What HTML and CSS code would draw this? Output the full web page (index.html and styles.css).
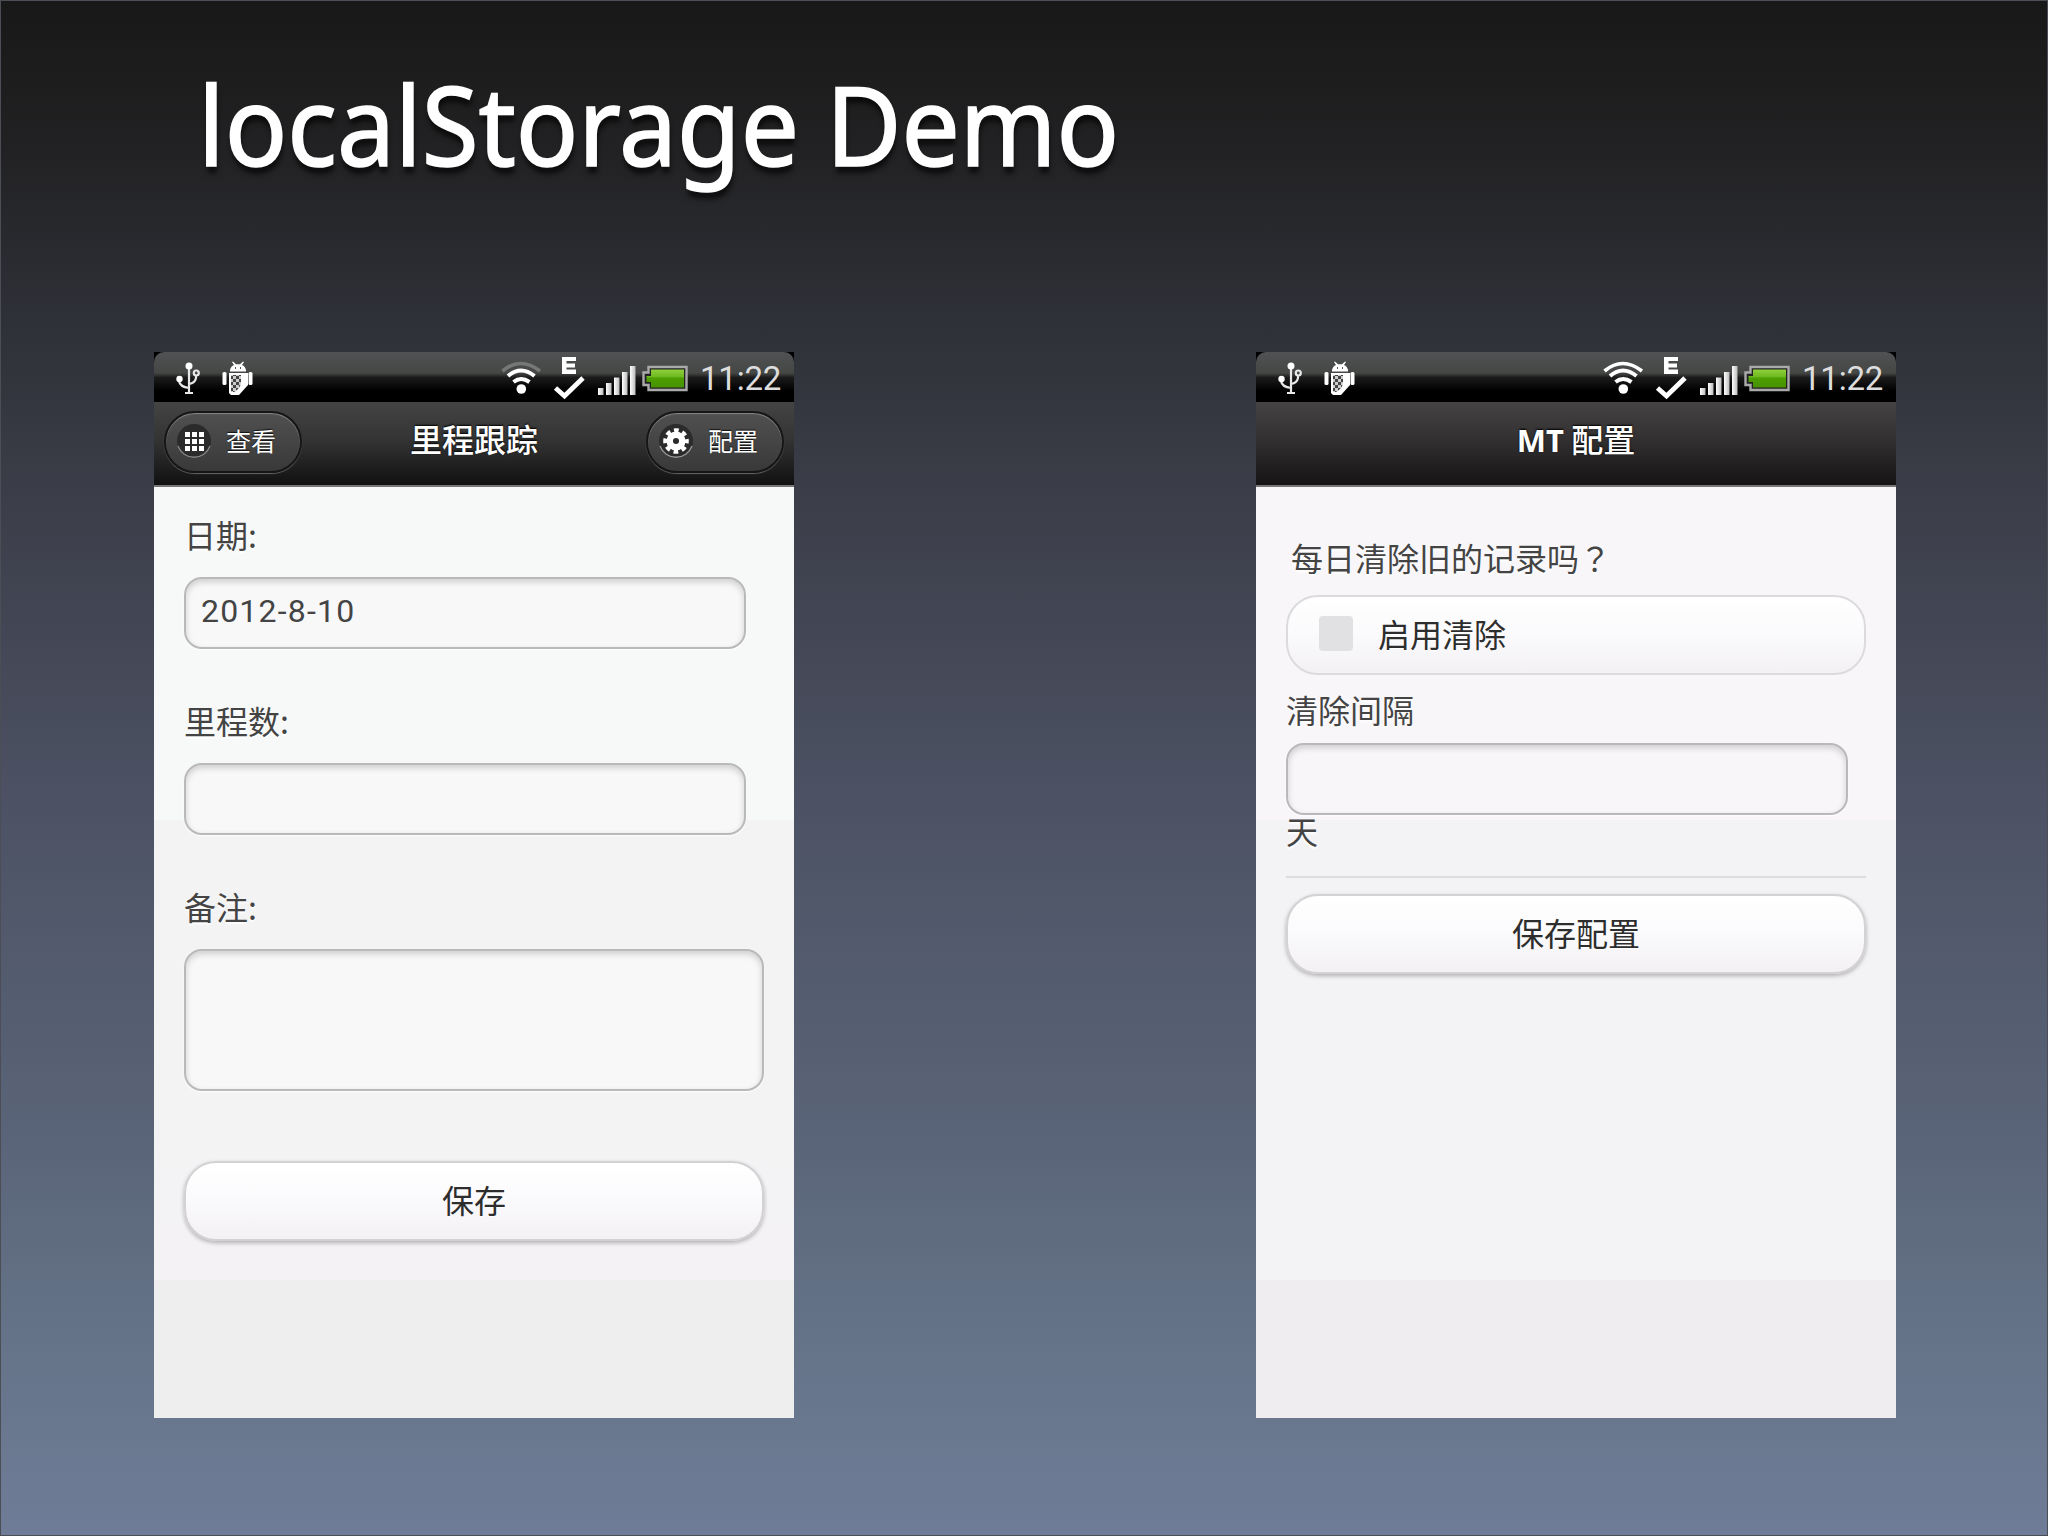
FILE: index.html
```html
<!DOCTYPE html>
<html lang="zh-CN">
<head>
<meta charset="utf-8">
<title>localStorage Demo</title>
<link rel="stylesheet" href="styles.css">
</head>
<body>
<svg class="defs" width="0" height="0" aria-hidden="true">
  <defs>
    <linearGradient id="bar" x1="0" y1="0" x2="1" y2="0"><stop offset="0" stop-color="#fff"/><stop offset="1" stop-color="#bbb"/></linearGradient>
    <linearGradient id="cell" x1="0" y1="0" x2="0" y2="1"><stop offset="0" stop-color="#8fd03c"/><stop offset=".42" stop-color="#6db81f"/><stop offset=".46" stop-color="#4e9f00"/><stop offset="1" stop-color="#469200"/></linearGradient>
    <pattern id="weave" width="6" height="6" patternUnits="userSpaceOnUse"><rect width="6" height="6" fill="#ccc"/><rect width="3" height="3" fill="#444"/><rect x="3" y="3" width="3" height="3" fill="#444"/></pattern>
    <symbol id="left-icons" viewBox="0 0 90 40">
      <g fill="none" stroke="#e8e8e8" stroke-width="2.2">
        <path d="M16 6V31M12 32H20M6 18V20Q7 26 16 27M23 15V17Q22 22 16 23"/>
        <circle cx="23.300" cy="12" r="2.500"/>
      </g>
      <circle cx="16" cy="5" r="3.500" fill="#fff"/><circle cx="6.500" cy="18" r="3.200" fill="#fff"/>
      <g fill="#fff">
        <path d="M57 9Q58 5 61 4L59 1L60 0.500L63 3.300H67L70 0.500L71 1L69 4Q72 5 73 9V10.500H57Z"/>
        <path d="M56 12H75V24L66 34H58L56 32Z"/>
        <rect x="49.500" y="11" width="4" height="13" rx="1.500"/><rect x="75.500" y="11" width="4" height="13" rx="1.500"/>
      </g>
      <path d="M58 14H68V22Q67 28 61 31H58Z" fill="url(#weave)"/>
      <path d="M62 7H63M67 7H68" stroke="#222" stroke-width="1.400"/>
    </symbol>
    <symbol id="right-icons" viewBox="0 0 194 50">
      <path d="M2.500 17Q20.500 2 40 17" fill="none" stroke="var(--outer)" stroke-width="3.600"/>
      <path d="M8 22Q21 11 34.500 22M13.500 28Q21 22 29.500 28" fill="none" stroke="#fff" stroke-width="4"/>
      <circle cx="21.300" cy="35" r="4.800" fill="#fff"/>
      <path d="M62 3H76V7H66.500V9.500H75V13.500H66.500V15.500H76V20H62Z" fill="#fff"/>
      <path d="M55.500 34L64.500 42L83 24" fill="none" stroke="#fff" stroke-width="4.800"/>
      <g fill="url(#bar)"><rect x="98" y="34" width="5.500" height="7"/><rect x="106" y="29" width="5.500" height="12"/><rect x="114" y="23.500" width="5.500" height="17.500"/><rect x="122" y="18" width="5.500" height="23"/><rect x="130" y="12" width="5.500" height="29"/></g>
      <path d="M148.500 13H186.500V36H148.500V31H143.500V18.500H148.500Z" fill="#222" stroke="#aaa" stroke-width="2.400"/>
      <path d="M151 15.500H184V33.500H151V28H146.500V22H151Z" fill="url(#cell)"/>
    </symbol>
  </defs>
</svg>
<main class="slide">
  <h1 class="title">localStorage Demo</h1>
  <div class="phones">
    <section class="phone">
      <div class="status">
        <svg class="status-left"><use href="#left-icons"/></svg>
        <svg class="status-right dim"><use href="#right-icons"/></svg>
        <span class="clock">11:22</span>
      </div>
      <header class="header">
        <a class="nav-button">
          <svg class="nav-icon" viewBox="0 0 36 36"><circle cx="18" cy="18" r="17" fill="#2b2b2b"/><path d="M2 23A17 17 0 0 0 34 23" fill="none" stroke="#888" stroke-width="1.300"/><path fill="#fff" d="M9 9h5v5h-5zM16 9h5v5h-5zM23 9h5v5h-5zM9 16h5v5h-5zM16 16h5v5h-5zM23 16h5v5h-5zM9 23h5v5h-5zM16 23h5v5h-5zM23 23h5v5h-5z"/></svg>
          <span class="nav-text">查看</span>
        </a>
        <h2 class="heading">里程跟踪</h2>
        <a class="nav-button">
          <svg class="nav-icon" viewBox="0 0 36 36"><circle cx="18" cy="18" r="17" fill="#2b2b2b"/><path d="M2 23A17 17 0 0 0 34 23" fill="none" stroke="#999" stroke-width="1.300"/><circle cx="18" cy="18" r="6.300" fill="none" stroke="#fff" stroke-width="6.500"/><circle cx="18" cy="18" r="10.800" fill="none" stroke="#fff" stroke-width="4" stroke-dasharray="4.700 3.782" stroke-dashoffset="2.350"/></svg>
          <span class="nav-text">配置</span>
        </a>
      </header>
      <div class="content">
        <label class="label">日期:</label>
        <div class="input">2012-8-10</div>
        <label class="label spaced">里程数:</label>
        <div class="input"></div>
        <label class="label spaced">备注:</label>
        <div class="input textarea"></div>
        <div class="button save">保存</div>
      </div>
    </section>
    <section class="phone warm">
      <div class="status">
        <svg class="status-left"><use href="#left-icons"/></svg>
        <svg class="status-right"><use href="#right-icons"/></svg>
        <span class="clock">11:22</span>
      </div>
      <header class="header centered">
        <h2 class="heading"><b>MT</b> 配置</h2>
      </header>
      <div class="content config">
        <label class="label question">每日清除旧的记录吗<span class="mark" lang="zh-TW">？</span></label>
        <div class="button check"><span class="box"></span>启用清除</div>
        <label class="label interval">清除间隔</label>
        <div class="input"></div>
        <div class="label unit">天</div>
        <hr class="rule">
        <div class="button">保存配置</div>
      </div>
    </section>
  </div>
</main>
</body>
</html>
```
FILE: styles.css
```css
* { box-sizing: border-box; }
body { margin: 0; font-family: "Noto Sans CJK SC", sans-serif; }
.defs { display: block; }
.slide {
  width: 2048px; height: 1536px; overflow: hidden;
  border: 1px solid #4b4f55;
  background: linear-gradient(#181818 0%, #222224 10%, #2f3138 21%, #3d3f4b 34%, #4b5162 51%, #5a6478 74%, #657489 88%, #6f7c97 100%);
}
.title {
  margin: 0 0 0 197px; height: 351px; padding-top: 45px;
  font: 400 109px/156px "Noto Sans", sans-serif; color: #fff;
  white-space: nowrap; text-shadow: 1px 7px 6px rgba(0,0,0,.65);
  -webkit-text-stroke: 1.6px #fff;
  transform: scaleX(.949); transform-origin: 0 0;
}
.phones { display: flex; justify-content: space-between; padding: 0 151px 0 153px; }
.phone { width: 640px; height: 1066px; display: flex; flex-direction: column; background: #000; }
.status {
  height: 50px; display: flex; align-items: flex-start; padding-left: 20px;
  border-radius: 10px 10px 0 0;
  background: linear-gradient(#505254 0%, #454745 42%, #1b1b1b 51%, #000 78%);
}
.status-left { width: 90px; height: 40px; margin: 9px 0 0 -1px; }
.status-right { width: 194px; height: 50px; margin: 2px 0 0 237px; --outer: #fff; }
.status-right.dim { --outer: #777; }
.clock { margin-left: 6px; font: 33px/54px Roboto, sans-serif; color: #ddd; letter-spacing: -.2px; }
.header {
  height: 85px; display: flex; justify-content: space-between; align-items: flex-start;
  padding: 9px 10px 0; border-bottom: 2px solid #777;
  background: linear-gradient(#444 0, #343434 45%, #111 100%);
}
.warm .header { background: linear-gradient(#454344 0, #323031 45%, #151314 100%); }
.header.centered { justify-content: center; }
.heading { margin: 3px 0 0; font-size: 32px; line-height: 48px; font-weight: 500; color: #fff; text-shadow: 0 -1px 2px #000; }
.heading b { font-family: "Noto Sans", sans-serif; font-size: 31px; font-weight: 700; }
.nav-button {
  width: 138px; height: 62px; padding: 0 0 2px 10px; display: flex; align-items: center; gap: 14px;
  border: 2px solid #161616; border-radius: 31px; color: #fff; font-size: 25px;
  background: linear-gradient(#505050, #393939);
  box-shadow: inset 0 1px 1px #888, 0 1px 1px #666; text-shadow: 0 -1px 1px #111;
}
.nav-icon { width: 36px; height: 36px; }
.nav-text { padding-bottom: 2px; }
.content {
  flex: 1; padding: 22px 30px; color: #444; font-size: 32px;
  background: linear-gradient(#f7f8f8 0 333px, #f3f3f4 333px 600px, #f4f2f4 793px, #efeeef 793px);
}
.warm .content { background: linear-gradient(#f8f6f9 0 333px, #f3f2f5 333px 793px, #efedf0 793px); }
.label { display: block; height: 68px; line-height: 50px; text-shadow: 0 2px 2px #fff; }
.label.spaced { margin-top: 46px; }
.input {
  width: 562px; height: 72px; padding-left: 15px; line-height: 65px;
  border: 2px solid #b9b9ba; border-radius: 18px; background: #f8f8f9;
  box-shadow: inset 0 3px 6px rgba(0,0,0,.17), 0 1px 2px #fff;
  font-family: Roboto, sans-serif; letter-spacing: 1.2px; color: #444;
}
.warm .input { background: #f8f6f9; }
.textarea { width: 580px; height: 142px; }
.button {
  width: 580px; height: 80px; padding-bottom: 4px; display: flex; align-items: center; justify-content: center;
  border: 2px solid #d3d1d3; border-radius: 32px; color: #2d2d2d; font-size: 32px;
  background: linear-gradient(#fff, #fbfafc 45%, #f3f1f4);
  box-shadow: 0 2px 4px rgba(0,0,0,.28); text-shadow: 0 1px 1px #fff;
}
.save { margin-top: 70px; }
.config { padding-top: 45px; }
.question { padding-left: 5px; height: 63px; }
.mark { font-family: "Noto Sans CJK TC", sans-serif; }
.check { justify-content: flex-start; padding-left: 31px; gap: 25px; box-shadow: none; border-color: #dcdadd; }
.box { width: 34px; height: 35px; border-radius: 4px; background: #e1e0e2; }
.interval { margin-top: 9px; height: 59px; }
.unit { height: 50px; margin-top: -10px; }
.rule { width: 580px; height: 2px; margin: 21px 0 16px; border: 0; background: #dedce0; }
```
